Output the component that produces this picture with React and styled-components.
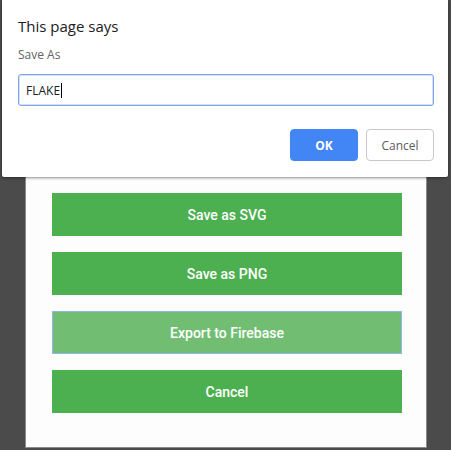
import React from "react";
import styled, { createGlobalStyle } from "styled-components";

const GlobalStyle = createGlobalStyle`
  html, body {
    margin: 0;
    padding: 0;
    background: #4b4b4b;
  }
  body {
    width: 451px;
    height: 450px;
    overflow: hidden;
    position: relative;
  }
`;

const exportOptions = [
  { label: "Save as SVG" },
  { label: "Save as PNG" },
  { label: "Export to Firebase", focused: true },
  { label: "Cancel" },
];

const App = () => {
  return (
    <>
      <GlobalStyle />
      <Page>
        <Panel>
          {exportOptions.map((opt) => (
            <GreenButton key={opt.label} focused={opt.focused}>
              {opt.label}
            </GreenButton>
          ))}
        </Panel>
      </Page>
      <PromptDialog>
        <Title>This page says</Title>
        <Message>Save As</Message>
        <Field>
          FLAKE
          <Caret />
        </Field>
        <Actions>
          <DialogButton primary>OK</DialogButton>
          <DialogButton>Cancel</DialogButton>
        </Actions>
      </PromptDialog>
    </>
  );
};

const Page = styled.div`
  display: flex;
  padding-left: 25px;
`;

const Panel = styled.div`
  /* sits under the prompt, only the lower part shows */
  width: 402px;
  height: 448px;
  box-sizing: border-box;
  background: #fdfdfd;
  border: 1px solid #8a8a8a;
  border-top: none;
  padding: 193px 24px 0 26px;
  display: flex;
  flex-direction: column;
  gap: 16px;
`;

const GreenButton = styled.button.withConfig({
  shouldForwardProp: (prop) => prop !== "focused",
})`
  width: 350px;
  height: 43px;
  flex-shrink: 0;
  box-sizing: border-box;
  border: ${(p) => (p.focused ? "1px solid #92b6ec" : "none")};
  background: ${(p) => (p.focused ? "#71be73" : "#4caf50")};
  color: #fff;
  font-family: Roboto, "Liberation Sans", sans-serif;
  font-size: 14px;
  font-weight: 500;
  padding: 0;
  cursor: pointer;
`;

const PromptDialog = styled.div`
  position: absolute;
  top: 0;
  left: 2px;
  width: 446px;
  height: 177px;
  box-sizing: border-box;
  background: #fff;
  border-radius: 0 0 2px 2px;
  box-shadow: 0 1px 3px rgba(0, 0, 0, 0.45);
  padding: 15px 14px 0 16px;
  font-family: "Open Sans", "Noto Sans", sans-serif;
  display: flex;
  flex-direction: column;
`;

const Title = styled.div`
  font-size: 15px;
  line-height: 22px;
  color: #202124;
`;

const Message = styled.div`
  margin-top: 9px;
  font-size: 12px;
  line-height: 18px;
  color: #5f6368;
`;

const Field = styled.div`
  margin-top: 10px;
  height: 32px;
  box-sizing: border-box;
  border: 1px solid #7ea6ec;
  box-shadow: inset 0 0 0 1px rgba(126, 166, 236, 0.35);
  border-radius: 3px;
  padding: 0 7px;
  display: flex;
  align-items: center;
  font-size: 12px;
  color: #202124;
`;

const Caret = styled.span`
  display: inline-block;
  width: 1px;
  height: 15px;
  margin-left: 1px;
  background: #000;
`;

const Actions = styled.div`
  margin-top: 23px;
  display: flex;
  justify-content: flex-end;
  gap: 8px;
`;

const DialogButton = styled.button.withConfig({
  shouldForwardProp: (prop) => prop !== "primary",
})`
  width: 68px;
  height: 32px;
  box-sizing: border-box;
  border-radius: 4px;
  border: 1px solid ${(p) => (p.primary ? "#4285f4" : "#c8c8c8")};
  background: ${(p) => (p.primary ? "#4285f4" : "#fff")};
  color: ${(p) => (p.primary ? "#fff" : "#5a5a5a")};
  font-family: "Open Sans", "Noto Sans", sans-serif;
  font-size: 12px;
  font-weight: ${(p) => (p.primary ? 700 : 400)};
  padding: 0;
`;

export default App;
